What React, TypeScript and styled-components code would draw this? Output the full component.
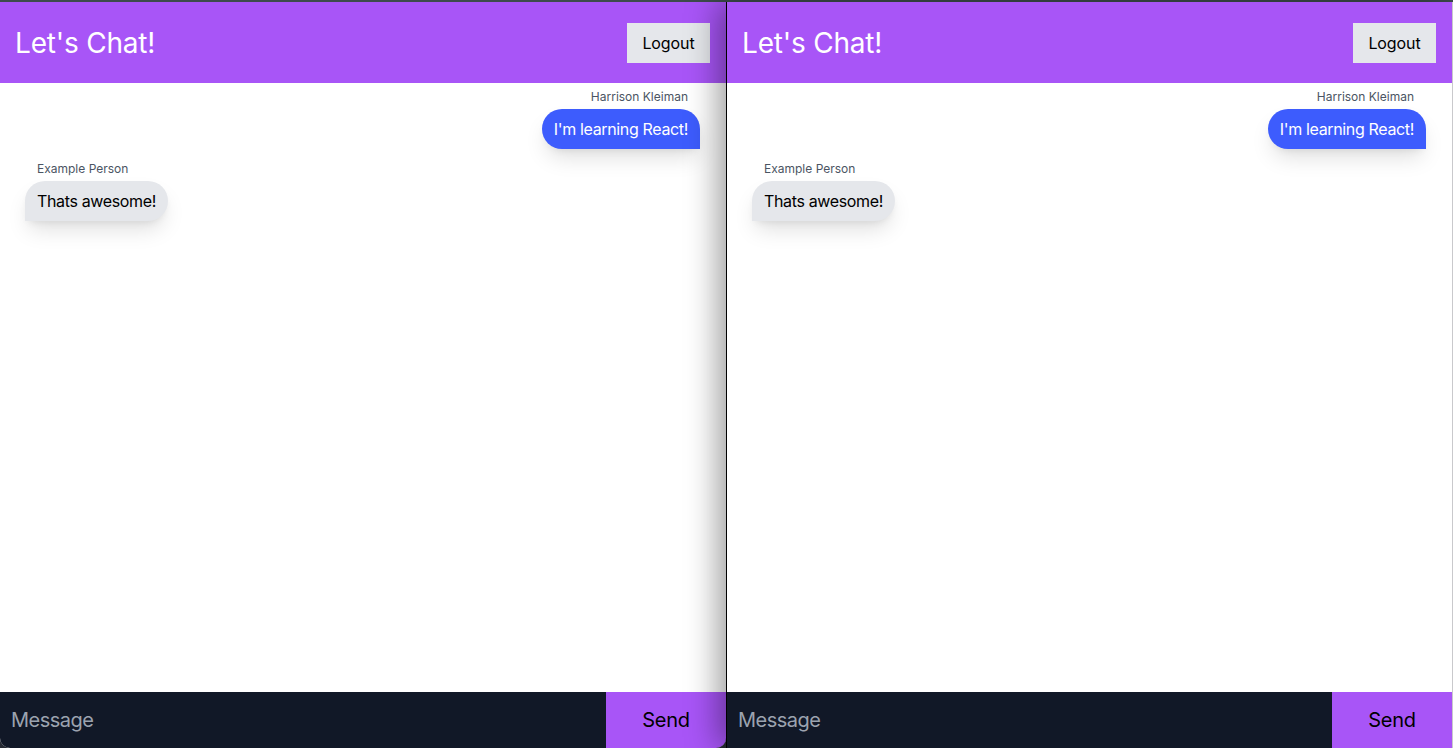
import styled, { createGlobalStyle } from 'styled-components'
import type { FunctionComponent } from 'react'

const GlobalStyle = createGlobalStyle`
  html, body {
    margin: 0;
    padding: 0;
    height: 100%;
  }
  body {
    background: #262a33;
    font-family: Inter, "Noto Sans", "Liberation Sans", sans-serif;
    overflow: hidden;
  }
  #root {
    height: 100%;
  }
`

const Desktop = styled.div`
  height: 100%;
  display: flex;
  flex-direction: column;
  border-top: 2px solid #3d4b4c;
  box-sizing: border-box;
`

const Windows = styled.div`
  flex: 1;
  display: flex;
  min-height: 0;
`

const Window = styled.section<{ $front?: boolean }>`
  width: ${({ $front }) => ($front ? '727px' : '726px')};
  flex: none;
  display: flex;
  flex-direction: column;
  background: #fff;
  overflow: hidden;
  box-sizing: border-box;
  position: relative;
  z-index: ${({ $front }) => ($front ? 2 : 1)};
  border-radius: ${({ $front }) => ($front ? '0' : '0 0 10px 10px')};
  border-left: ${({ $front }) => ($front ? '1px solid #000' : 'none')};
  border-right: ${({ $front }) => ($front ? '1px solid #c9c9cc' : 'none')};
  box-shadow: ${({ $front }) =>
    $front ? '-8px 0 30px rgba(0, 0, 0, 0.38)' : 'none'};
`

const Header = styled.header`
  height: 81px;
  flex: none;
  display: flex;
  align-items: center;
  justify-content: space-between;
  padding: 0 16px 0 15px;
  background: #a855f7;
`

const Title = styled.h1`
  margin: 0;
  font-size: 28px;
  font-weight: 400;
  color: #fff;
  letter-spacing: -0.2px;
`

const LogoutButton = styled.button`
  width: 83px;
  height: 40px;
  border: none;
  background: #e5e7eb;
  color: #000;
  font-family: inherit;
  font-size: 16px;
  letter-spacing: -0.1px;
  cursor: pointer;
`

const Messages = styled.main`
  flex: 1;
  display: flex;
  flex-direction: column;
  gap: 12px;
  padding: 6px 26px 0 25px;
`

const MessageGroup = styled.div<{ $mine: boolean }>`
  display: flex;
  flex-direction: column;
  align-items: ${({ $mine }) => ($mine ? 'flex-end' : 'flex-start')};
  gap: 4px;
`

const Author = styled.span`
  padding: 0 12px;
  font-size: 12px;
  line-height: 16px;
  color: #4b5563;
`

const Bubble = styled.div<{ $mine: boolean }>`
  padding: 8px 12px;
  font-size: 16px;
  line-height: 24px;
  letter-spacing: -0.35px;
  color: ${({ $mine }) => ($mine ? '#fff' : '#000')};
  background: ${({ $mine }) => ($mine ? '#3d5cfd' : '#e5e7eb')};
  border-radius: ${({ $mine }) => ($mine ? '20px 20px 0 20px' : '20px 20px 20px 0')};
  box-shadow: 0 12px 22px -4px rgba(0, 0, 0, 0.13),
    0 4px 8px -4px rgba(0, 0, 0, 0.1);
`

const Composer = styled.form`
  height: 56px;
  flex: none;
  display: flex;
  background: #111827;
`

const MessageInput = styled.input`
  flex: 1;
  min-width: 0;
  border: none;
  outline: none;
  background: transparent;
  padding: 0 11px;
  font-family: inherit;
  font-size: 20px;
  letter-spacing: -0.5px;
  color: #fff;
  caret-color: #fff;

  &::placeholder {
    color: #9ca3af;
  }
`

const SendButton = styled.button`
  width: 120px;
  flex: none;
  border: none;
  background: #a855f7;
  color: #000;
  font-family: inherit;
  font-size: 20px;
  letter-spacing: -0.3px;
  cursor: pointer;
`

const messages = [
  { id: 1, author: 'Harrison Kleiman', text: "I'm learning React!", mine: true },
  { id: 2, author: 'Example Person', text: 'Thats awesome!', mine: false },
]

const ChatWindow: FunctionComponent<{ front?: boolean }> = ({ front }) => (
  <Window $front={front}>
    <Header>
      <Title>Let's Chat!</Title>
      <LogoutButton type="button">Logout</LogoutButton>
    </Header>

    <Messages>
      {messages.map((message) => (
        <MessageGroup key={message.id} $mine={message.mine}>
          <Author>{message.author}</Author>
          <Bubble $mine={message.mine}>{message.text}</Bubble>
        </MessageGroup>
      ))}
    </Messages>

    <Composer onSubmit={(e) => e.preventDefault()}>
      <MessageInput placeholder="Message" autoFocus={front} />
      <SendButton type="submit">Send</SendButton>
    </Composer>
  </Window>
)

const App: FunctionComponent = () => (
  <>
    <GlobalStyle />
    <Desktop>
      <Windows>
        <ChatWindow />
        <ChatWindow front />
      </Windows>
    </Desktop>
  </>
)

export default App
